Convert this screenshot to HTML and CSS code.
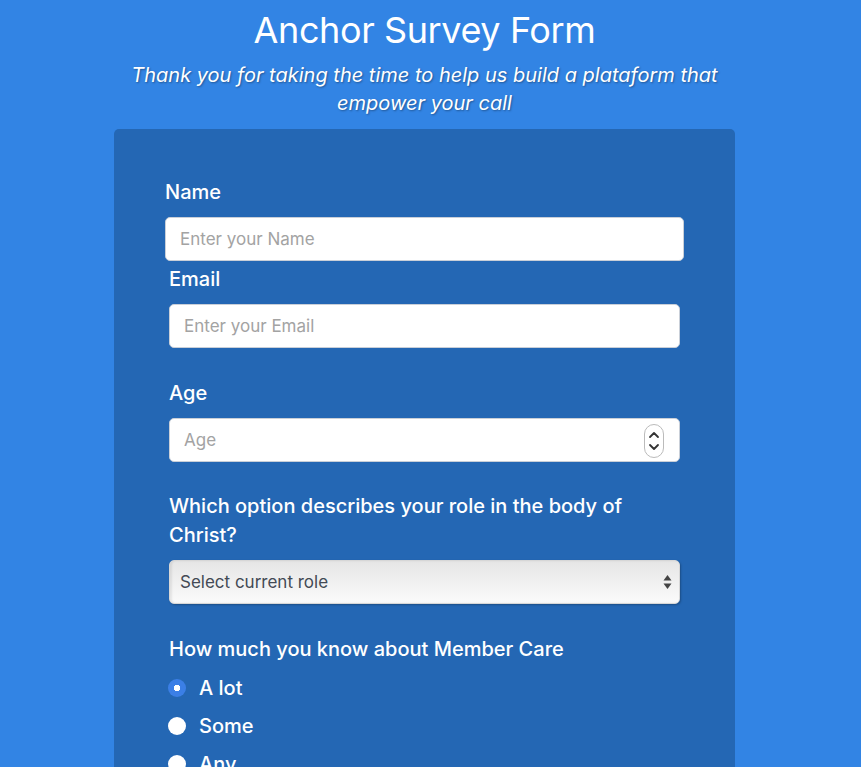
FILE: index.html
```html
<!DOCTYPE html>
<html lang="en">
<head>
<meta charset="utf-8">
<title>Anchor Survey Form</title>
<link rel="stylesheet" href="styles.css">
</head>
<body>
<div class="page">
  <header class="header">
    <h1 class="title">Anchor Survey Form</h1>
    <p class="subtitle">Thank you for taking the time to help us build a plataform that empower your call</p>
  </header>
  <form class="survey">
    <div class="field field-first">
      <label class="label" for="name">Name</label>
      <input class="input" id="name" type="text" placeholder="Enter your Name">
    </div>
    <div class="field">
      <label class="label" for="email">Email</label>
      <input class="input" id="email" type="email" placeholder="Enter your Email">
    </div>
    <div class="field">
      <label class="label" for="age">Age</label>
      <div class="number-wrap">
        <input class="input" id="age" type="number" placeholder="Age">
        <span class="spinner">
          <svg width="12" height="8" viewBox="0 0 12 8"><path d="M2 6 L6 2 L10 6" fill="none" stroke="#333" stroke-width="1.8" stroke-linecap="round" stroke-linejoin="round"/></svg>
          <svg width="12" height="8" viewBox="0 0 12 8"><path d="M2 2 L6 6 L10 2" fill="none" stroke="#333" stroke-width="1.8" stroke-linecap="round" stroke-linejoin="round"/></svg>
        </span>
      </div>
    </div>
    <div class="field">
      <label class="label label-question" for="role">Which option describes your role in the body of Christ?</label>
      <div class="select-wrap">
        <select class="select" id="role">
          <option>Select current role</option>
        </select>
        <span class="select-arrows">
          <svg width="9" height="16" viewBox="0 0 9 16"><path d="M4.5 1 L8.5 6.5 L0.5 6.5 Z" fill="#444"/><path d="M4.5 15 L8.5 9.5 L0.5 9.5 Z" fill="#444"/></svg>
        </span>
      </div>
    </div>
    <div class="field">
      <p class="label label-group">How much you know about Member Care</p>
      <label class="radio-row"><input class="radio" type="radio" name="know" checked><span>A lot</span></label>
      <label class="radio-row"><input class="radio" type="radio" name="know"><span>Some</span></label>
      <label class="radio-row"><input class="radio" type="radio" name="know"><span>Any</span></label>
    </div>
  </form>
</div>
</body>
</html>
```
FILE: styles.css
```css
* { box-sizing: border-box; }

html, body {
  margin: 0;
  padding: 0;
  background: #3284e4;
  font-family: "Inter", "Noto Sans", sans-serif;
  color: #fff;
}

.page {
  width: 849px;
  display: flex;
  flex-direction: column;
  align-items: center;
}

.header {
  width: 621px;
  text-align: center;
}

.title {
  margin: 9px 0 0;
  font-size: 36px;
  line-height: 43px;
  font-weight: 400;
  letter-spacing: -0.4px;
}

.subtitle {
  margin: 9px auto 0;
  max-width: 600px;
  font-size: 20px;
  line-height: 28px;
  font-style: italic;
  letter-spacing: 0;
  text-shadow: 1px 1px 2px rgba(0, 0, 0, 0.35);
}

.survey {
  width: 621px;
  margin-top: 12px;
  background: #2467b4;
  border-radius: 5px;
  padding: 49px 51px 40px;
  min-height: 700px;
}

.field {
  margin: 0 4px 31px;
}

.field-first {
  margin: 0 0 4px;
}

.label {
  display: block;
  margin: 0 0 11px;
  font-size: 20px;
  line-height: 28px;
  font-weight: 500;
  letter-spacing: 0;
}

.label-question {
  line-height: 29px;
  margin-top: -1px;
  margin-bottom: 10px;
}

.input,
.select {
  display: block;
  width: 100%;
  height: 44px;
  margin: 0;
  border: 1px solid #c9cfd8;
  border-radius: 5px;
  background: #fff;
  padding: 0 14px;
  font-family: inherit;
  font-size: 17px;
  color: #333;
  outline: none;
  letter-spacing: 0;
}

.input::placeholder {
  color: #a3a3a3;
}

.number-wrap,
.select-wrap {
  position: relative;
}

.input[type=number]::-webkit-inner-spin-button,
.input[type=number]::-webkit-outer-spin-button {
  -webkit-appearance: none;
  margin: 0;
}

.input[type=number] {
  -moz-appearance: textfield;
}

.spinner {
  position: absolute;
  right: 16px;
  top: 6px;
  width: 20px;
  height: 34px;
  border: 1px solid #bbb;
  border-radius: 10px;
  background: #fff;
  display: flex;
  flex-direction: column;
  align-items: center;
  justify-content: center;
  gap: 4px;
}

.select {
  -webkit-appearance: none;
  appearance: none;
  background: linear-gradient(#e6e6e6, #fbfbfb);
  border: 1px solid #d7d7d7;
  box-shadow: inset 2px 0 2px rgba(0,0,0,0.08), 1px 1px 2px rgba(0,0,0,0.25);
  padding: 0 10px;
  color: #434a55;
}

.select-arrows {
  position: absolute;
  right: 8px;
  top: 14px;
  display: flex;
}

.label-group {
  margin-bottom: 6px;
}

.radio-row {
  display: flex;
  align-items: center;
  height: 38px;
  gap: 13px;
  font-size: 20px;
  line-height: 28px;
  font-weight: 500;
  letter-spacing: 0;
}

.radio {
  -webkit-appearance: none;
  appearance: none;
  width: 18px;
  height: 18px;
  margin: 0 0 0 -1px;
  border-radius: 50%;
  background: #fff;
  border: none;
  flex: none;
}

.radio:checked {
  background: radial-gradient(circle, #fff 0 3px, #3b7fe6 3.5px);
}
```
